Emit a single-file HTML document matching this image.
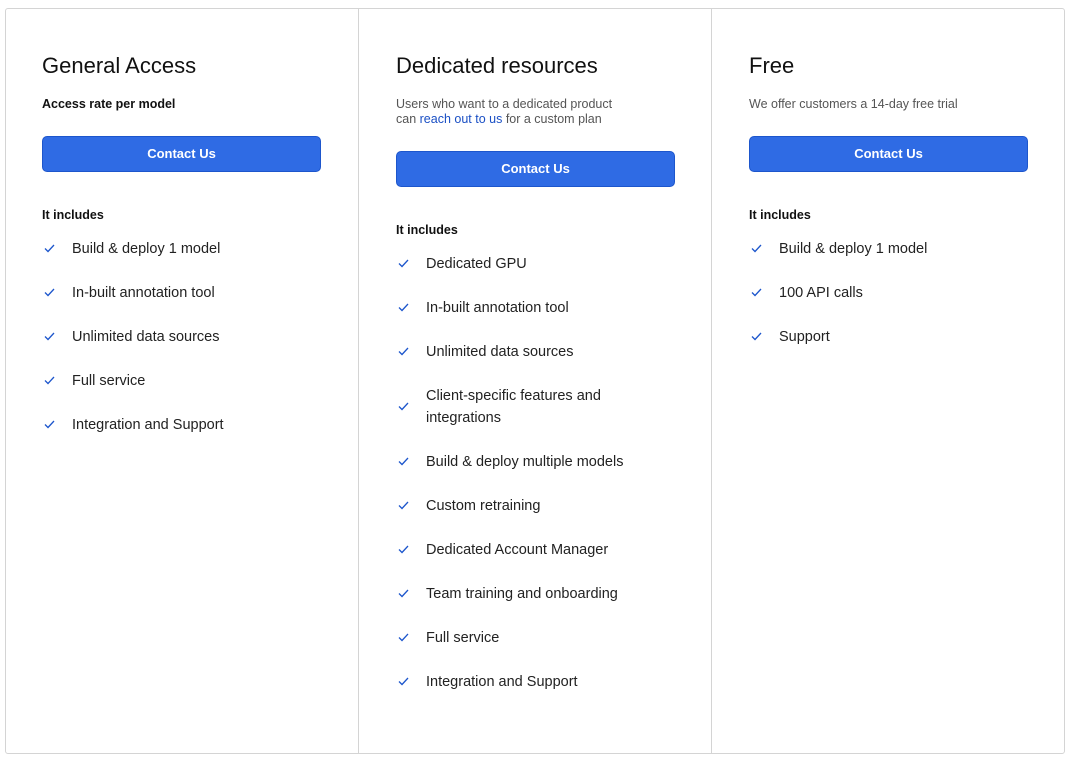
<!DOCTYPE html>
<html><head><style>
*{margin:0;padding:0;box-sizing:border-box}
body{width:1070px;height:758px;background:#fff;font-family:"Liberation Sans",sans-serif;color:#111;position:relative;overflow:hidden}
.box{position:absolute;left:5px;top:8px;width:1060px;height:746px;border:1px solid #d4d4d4;border-radius:3px}
.div{position:absolute;top:8px;width:1px;height:746px;background:#d4d4d4}
.col{position:absolute;top:0;width:280px}
h2{position:absolute;top:53px;font-size:22px;font-weight:normal;color:#111;white-space:nowrap}
.sub{position:absolute;top:97px;font-size:12.5px;line-height:15px;color:#555;white-space:nowrap}
.sub b{font-weight:bold;color:#111}
.sub a{color:#1a4fc4;text-decoration:none}
.btn{position:absolute;left:0;width:279px;height:36px;background:#2f6be4;border:1px solid #1d56cc;border-radius:5px;color:#fff;font-weight:bold;font-size:13px;text-align:center;line-height:34px}
.inc{position:absolute;font-size:12.5px;font-weight:bold;color:#111}
ul{position:absolute;left:0;list-style:none}
li{position:relative;padding-left:30px;font-size:14.5px;color:#222;height:44px;display:flex;align-items:center;line-height:22px}
li.two{height:66px}
li svg{position:absolute;left:2px;top:50%;margin-top:-5px}
</style></head><body>
<div class="box"></div>
<div class="div" style="left:358px"></div>
<div class="div" style="left:711px"></div>

<div class="col" style="left:42px">
<h2>General Access</h2>
<div class="sub"><b>Access rate per model</b></div>
<div class="btn" style="top:136px">Contact Us</div>
<div class="inc" style="top:208px">It includes</div>
<ul style="top:227px">
<li><svg width="11" height="9" viewBox="0 0 11 9"><path d="M1 4.5L4 7.5L10 1" fill="none" stroke="#1d56cc" stroke-width="1.3"/></svg>Build &amp; deploy 1 model</li>
<li><svg width="11" height="9" viewBox="0 0 11 9"><path d="M1 4.5L4 7.5L10 1" fill="none" stroke="#1d56cc" stroke-width="1.3"/></svg>In-built annotation tool</li>
<li><svg width="11" height="9" viewBox="0 0 11 9"><path d="M1 4.5L4 7.5L10 1" fill="none" stroke="#1d56cc" stroke-width="1.3"/></svg>Unlimited data sources</li>
<li><svg width="11" height="9" viewBox="0 0 11 9"><path d="M1 4.5L4 7.5L10 1" fill="none" stroke="#1d56cc" stroke-width="1.3"/></svg>Full service</li>
<li><svg width="11" height="9" viewBox="0 0 11 9"><path d="M1 4.5L4 7.5L10 1" fill="none" stroke="#1d56cc" stroke-width="1.3"/></svg>Integration and Support</li>
</ul>
</div>

<div class="col" style="left:396px">
<h2>Dedicated resources</h2>
<div class="sub">Users who want to a dedicated product<br>can <a>reach out to us</a> for a custom plan</div>
<div class="btn" style="top:151px">Contact Us</div>
<div class="inc" style="top:223px">It includes</div>
<ul style="top:242px">
<li><svg width="11" height="9" viewBox="0 0 11 9"><path d="M1 4.5L4 7.5L10 1" fill="none" stroke="#1d56cc" stroke-width="1.3"/></svg>Dedicated GPU</li>
<li><svg width="11" height="9" viewBox="0 0 11 9"><path d="M1 4.5L4 7.5L10 1" fill="none" stroke="#1d56cc" stroke-width="1.3"/></svg>In-built annotation tool</li>
<li><svg width="11" height="9" viewBox="0 0 11 9"><path d="M1 4.5L4 7.5L10 1" fill="none" stroke="#1d56cc" stroke-width="1.3"/></svg>Unlimited data sources</li>
<li class="two"><svg width="11" height="9" viewBox="0 0 11 9"><path d="M1 4.5L4 7.5L10 1" fill="none" stroke="#1d56cc" stroke-width="1.3"/></svg>Client-specific features and<br>integrations</li>
<li><svg width="11" height="9" viewBox="0 0 11 9"><path d="M1 4.5L4 7.5L10 1" fill="none" stroke="#1d56cc" stroke-width="1.3"/></svg>Build &amp; deploy multiple models</li>
<li><svg width="11" height="9" viewBox="0 0 11 9"><path d="M1 4.5L4 7.5L10 1" fill="none" stroke="#1d56cc" stroke-width="1.3"/></svg>Custom retraining</li>
<li><svg width="11" height="9" viewBox="0 0 11 9"><path d="M1 4.5L4 7.5L10 1" fill="none" stroke="#1d56cc" stroke-width="1.3"/></svg>Dedicated Account Manager</li>
<li><svg width="11" height="9" viewBox="0 0 11 9"><path d="M1 4.5L4 7.5L10 1" fill="none" stroke="#1d56cc" stroke-width="1.3"/></svg>Team training and onboarding</li>
<li><svg width="11" height="9" viewBox="0 0 11 9"><path d="M1 4.5L4 7.5L10 1" fill="none" stroke="#1d56cc" stroke-width="1.3"/></svg>Full service</li>
<li><svg width="11" height="9" viewBox="0 0 11 9"><path d="M1 4.5L4 7.5L10 1" fill="none" stroke="#1d56cc" stroke-width="1.3"/></svg>Integration and Support</li>
</ul>
</div>

<div class="col" style="left:749px">
<h2>Free</h2>
<div class="sub">We offer customers a 14-day free trial</div>
<div class="btn" style="top:136px">Contact Us</div>
<div class="inc" style="top:208px">It includes</div>
<ul style="top:227px">
<li><svg width="11" height="9" viewBox="0 0 11 9"><path d="M1 4.5L4 7.5L10 1" fill="none" stroke="#1d56cc" stroke-width="1.3"/></svg>Build &amp; deploy 1 model</li>
<li><svg width="11" height="9" viewBox="0 0 11 9"><path d="M1 4.5L4 7.5L10 1" fill="none" stroke="#1d56cc" stroke-width="1.3"/></svg>100 API calls</li>
<li><svg width="11" height="9" viewBox="0 0 11 9"><path d="M1 4.5L4 7.5L10 1" fill="none" stroke="#1d56cc" stroke-width="1.3"/></svg>Support</li>
</ul>
</div>
</body></html>
